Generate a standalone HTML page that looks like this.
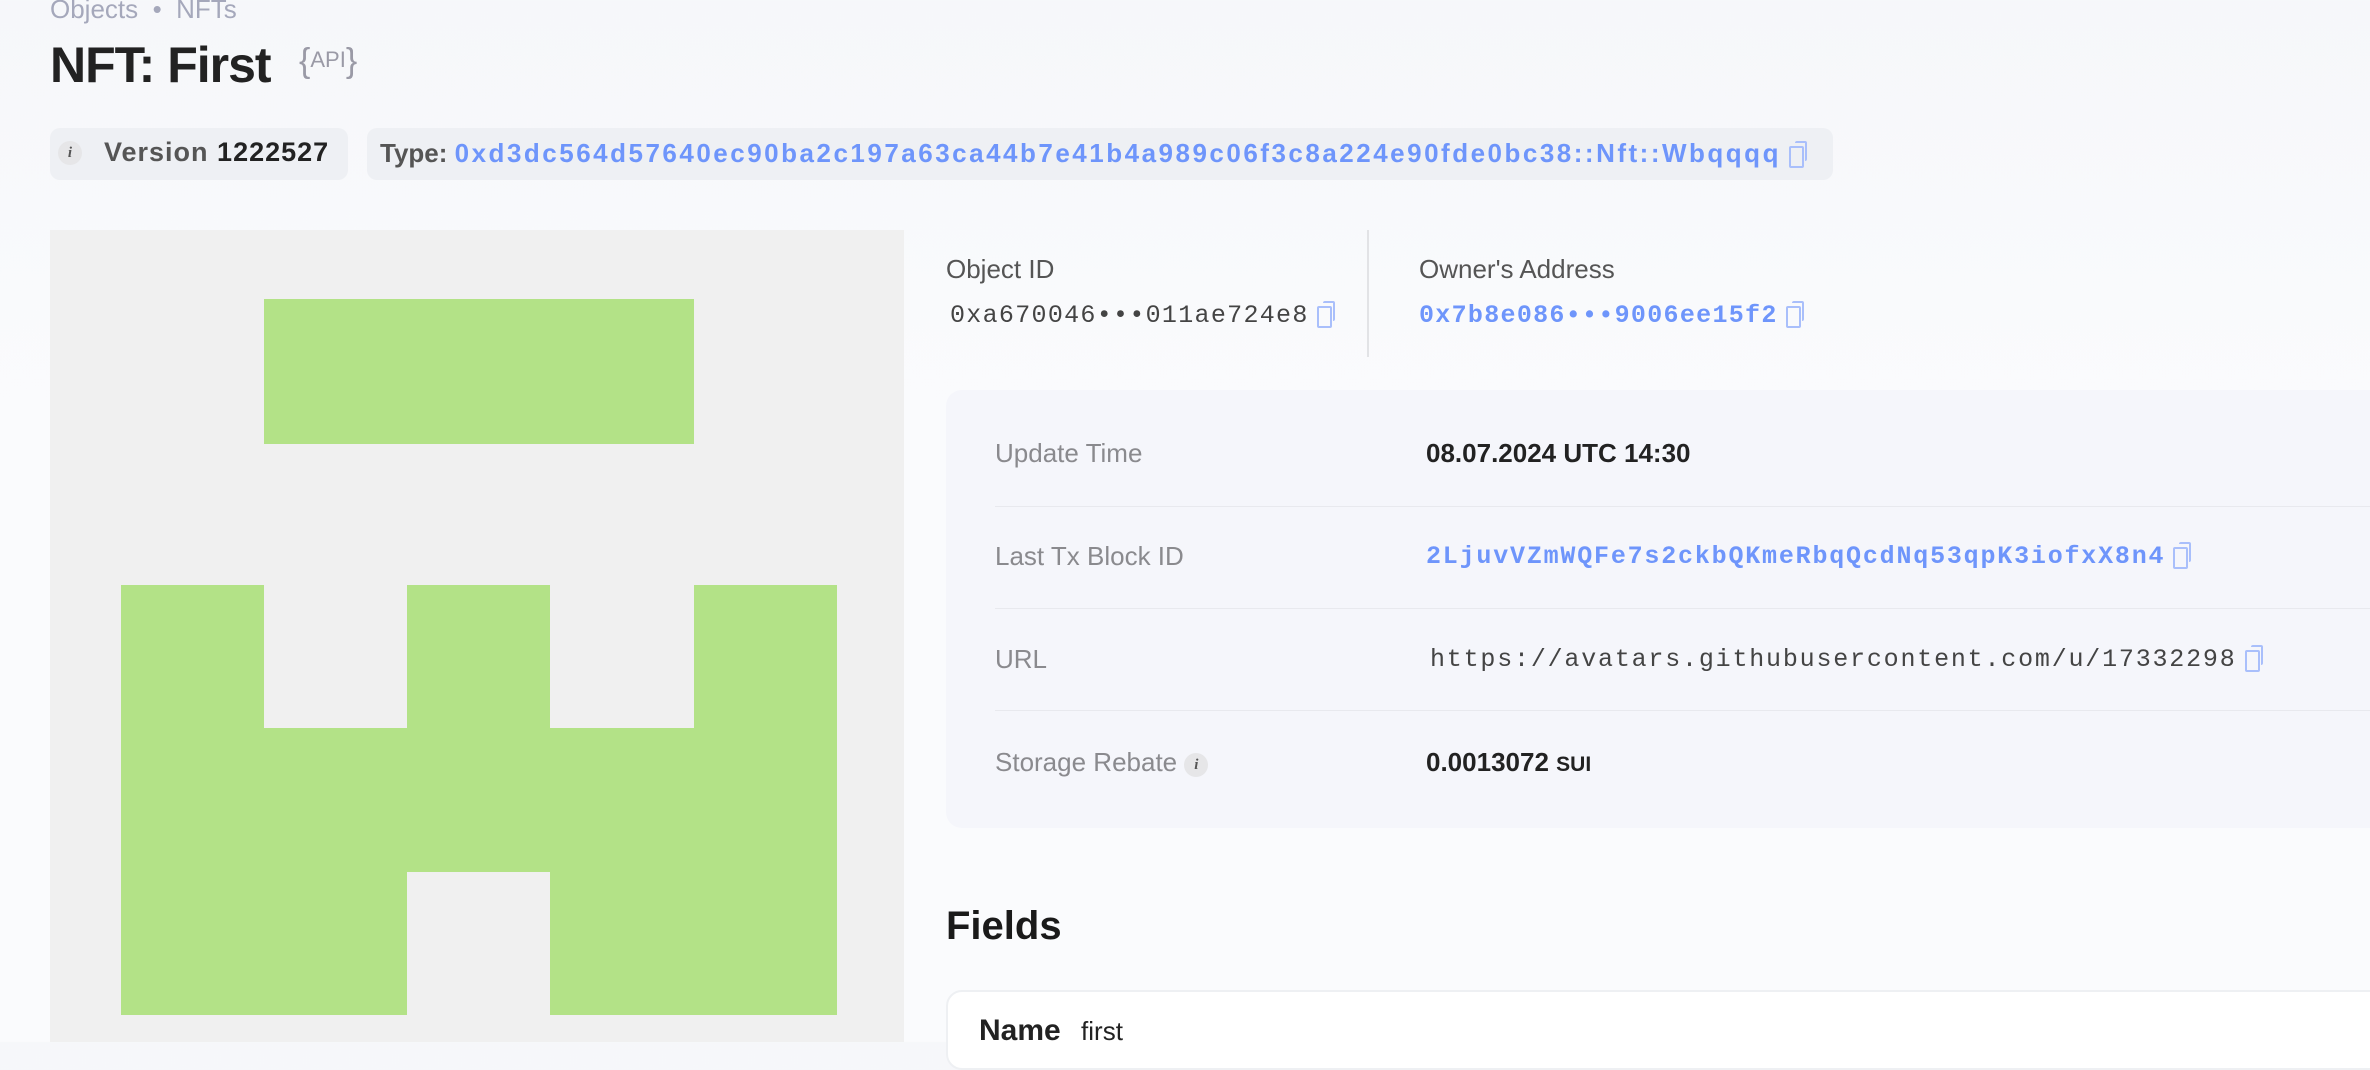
<!DOCTYPE html>
<html><head><meta charset="utf-8"><style>
*{margin:0;padding:0;box-sizing:border-box}
body{width:2370px;height:1042px;overflow:hidden;background:linear-gradient(#f6f7fa,#fafbfd 400px);font-family:"Liberation Sans",sans-serif;position:relative;color:#1f1f1f}
.a{position:absolute;white-space:nowrap}
.mono{font-family:"Liberation Mono",monospace}
.blue{color:#6e95fb}
.cp{display:inline-block;width:17px;height:24px;position:relative;vertical-align:-3px;margin-left:8px}
.cp:before{content:"";position:absolute;left:0;top:5px;width:11px;height:18px;border:2px solid #a9bffb;border-radius:2px}
.cp:after{content:"";position:absolute;left:6px;top:0;width:10px;height:18px;border-top:2px solid #a9bffb;border-right:2px solid #a9bffb;border-radius:2px}
.lbl{font-size:26px;color:#8a8a8e}
.row{position:absolute;left:995px;right:0;height:1px;background:#e8e9ee}
.g{position:absolute;background:#b3e287}
.ic{display:inline-block;width:24px;height:24px;border-radius:50%;background:#e6e6e8;color:#555;font:italic bold 15px "Liberation Serif",serif;text-align:center;line-height:24px;vertical-align:2px}
</style></head><body>
<div class="a" style="left:50px;top:-6px;font-size:26px;color:#a5a8bb">Objects &nbsp;•&nbsp; NFTs</div>
<div class="a" style="left:50px;top:36px;font-size:50px;font-weight:bold;color:#222;letter-spacing:-1px">NFT: First</div>
<div class="a" style="left:299px;top:42px;font-size:34px;color:#9a9aa6">{<span style="font-size:22px;vertical-align:5px">API</span>}</div>

<div class="a" style="left:50px;top:128px;width:298px;height:52px;background:#eef0f4;border-radius:10px"></div>
<div class="a" style="left:58px;top:141px"><span class="ic">i</span></div>
<div class="a" style="left:104px;top:137px;font-size:27px;font-weight:bold;color:#555;letter-spacing:1px">Version <span style="color:#222">1222527</span></div>

<div class="a" style="left:367px;top:128px;width:1466px;height:52px;background:#eef0f4;border-radius:10px"></div>
<div class="a" style="left:380px;top:138px;font-size:26px;font-weight:bold;color:#555">Type: <span class="blue" style="letter-spacing:2.5px">0xd3dc564d57640ec90ba2c197a63ca44b7e41b4a989c06f3c8a224e90fde0bc38::Nft::Wbqqqq</span><span class="cp"></span></div>

<div class="a" style="left:50px;top:230px;width:854px;height:812px;background:#f0f0f0"></div>
<div class="g" style="left:264px;top:299px;width:430px;height:145px"></div>
<div class="g" style="left:121px;top:585px;width:143px;height:430px"></div>
<div class="g" style="left:407px;top:585px;width:143px;height:287px"></div>
<div class="g" style="left:694px;top:585px;width:143px;height:430px"></div>
<div class="g" style="left:121px;top:728px;width:716px;height:144px"></div>
<div class="g" style="left:264px;top:872px;width:143px;height:143px"></div>
<div class="g" style="left:550px;top:872px;width:144px;height:143px"></div>

<div class="a" style="left:946px;top:254px;font-size:26px;color:#555">Object ID</div>
<div class="a mono" style="left:950px;top:301px;font-size:25px;color:#444;letter-spacing:1.3px">0xa670046•••011ae724e8<span class="cp"></span></div>
<div class="a" style="left:1367px;top:230px;width:2px;height:127px;background:#e2e3e6"></div>
<div class="a" style="left:1419px;top:254px;font-size:26px;color:#555">Owner's Address</div>
<div class="a mono blue" style="left:1419px;top:301px;font-size:25px;letter-spacing:1.3px;font-weight:bold">0x7b8e086•••9006ee15f2<span class="cp"></span></div>

<div class="a" style="left:946px;top:390px;width:1450px;height:438px;background:#f5f6fb;border-radius:16px"></div>
<div class="row" style="top:506px"></div><div class="row" style="top:608px"></div><div class="row" style="top:710px"></div>
<div class="a lbl" style="left:995px;top:438px">Update Time</div>
<div class="a" style="left:1426px;top:438px;font-size:26px;font-weight:bold;color:#222">08.07.2024 UTC 14:30</div>
<div class="a lbl" style="left:995px;top:541px">Last Tx Block ID</div>
<div class="a mono blue" style="left:1426px;top:542px;font-size:25px;letter-spacing:1.8px;font-weight:bold">2LjuvVZmWQFe7s2ckbQKmeRbqQcdNq53qpK3iofxX8n4<span class="cp"></span></div>
<div class="a lbl" style="left:995px;top:644px">URL</div>
<div class="a mono" style="left:1430px;top:645px;font-size:25px;color:#444;letter-spacing:1.8px">https://avatars.githubusercontent.com/u/17332298<span class="cp"></span></div>
<div class="a lbl" style="left:995px;top:747px">Storage Rebate <span class="ic">i</span></div>
<div class="a" style="left:1426px;top:747px;font-size:26px;font-weight:bold;color:#222">0.0013072 <span style="font-size:21px">SUI</span></div>

<div class="a" style="left:946px;top:904px;font-size:40px;font-weight:bold;color:#1a1a1a">Fields</div>
<div class="a" style="left:946px;top:990px;width:1450px;height:80px;background:#fff;border:2px solid #eef0f3;border-radius:16px"></div>
<div class="a" style="left:979px;top:1014px;font-size:30px;font-weight:bold;color:#222">Name <span style="font-weight:normal;font-size:26px;margin-left:12px">first</span></div>
</body></html>
